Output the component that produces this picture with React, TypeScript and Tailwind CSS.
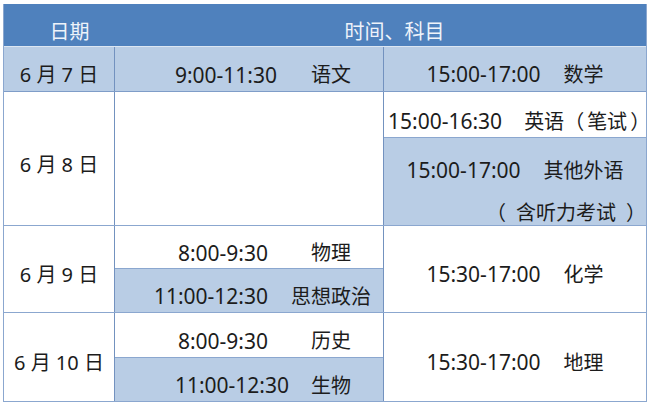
import React from "react";

const FONT = { fontFamily: '"Noto Sans", "Noto Sans CJK SC", sans-serif' };

const MidSlot = ({ time = "", subject = "", pr = "pr-[14px]", bg = "bg-white", h = "h-[45px]", border = true }) => {
  return (
    <div className={`grid grid-cols-[176px_80px] items-center pt-[12px] ${h} ${bg} ${border ? "border-b border-[#8ba7cf]" : ""}`}>
      <span className={`text-right text-[21px] ${pr}`}>{time}</span>
      <span className="text-center">{subject}</span>
    </div>
  );
};

const RightSlot = ({ time = "", subject = "" }) => {
  return (
    <div className="flex items-center justify-center gap-[23px] h-full pt-[11px]">
      <span className="text-[21px]">{time}</span>
      <span>{subject}</span>
    </div>
  );
};

const DateCell = ({ text = "", bg = "bg-white" }) => {
  return (
    <div className={`w-[111px] shrink-0 flex items-center justify-center pt-[12px] border-r border-[#7392bf] ${bg}`}>
      <span className="whitespace-pre">{text}</span>
    </div>
  );
};

// fullwidth brackets, spaced like the original sheet
const Paren = ({ children = "" as React.ReactNode, open = "pr-[3px]", close = "pl-[4px]" }) => {
  return (
    <span className="inline-flex items-center whitespace-nowrap shrink-0">
      <span className={open}>（</span>
      <span>{children}</span>
      <span className={close}>）</span>
    </span>
  );
};

export default function App() {
  return (
    <div className="w-[650px] h-[405px] bg-white pt-[4px] pl-[3px] text-[20px] text-[#1c1c1c] leading-none" style={FONT}>
      <div className="w-[644px] border-l border-r border-b border-[#8ba7cf]">
        {/* header */}
        <div className="flex h-[43px] bg-[#4f81bd] text-[#eef3fa] border-b border-[#dce6f2]">
          <div className="w-[111px] flex items-end justify-center pb-[4px] pl-[20px]">日期</div>
          <div className="flex-1 flex items-end justify-center pb-[4px] pl-[28px]">时间、科目</div>
        </div>

        {/* 6月7日 */}
        <div className="flex h-[45px] bg-[#b9cde5] border-b border-[#7f9dc8]">
          <DateCell text="6 月 7 日" bg="bg-[#b9cde5]" />
          <div className="w-[269px] shrink-0 border-r border-[#7392bf]">
            <MidSlot time="9:00-11:30" subject="语文" pr="pr-[14px]" bg="bg-[#b9cde5]" h="h-full" border={false} />
          </div>
          <div className="flex-1">
            <RightSlot time="15:00-17:00" subject="数学" />
          </div>
        </div>

        {/* 6月8日 */}
        <div className="flex h-[134px] border-b border-[#8ba7cf]">
          <DateCell text="6 月 8 日" />
          <div className="w-[269px] shrink-0 border-r border-[#7392bf] bg-white" />
          <div className="flex-1 flex flex-col min-w-0">
            <div className="h-[46px] flex items-center gap-[22px] border-b border-[#8ba7cf] pl-[4px] pt-[14px] whitespace-nowrap">
              <span className="text-[21px] shrink-0">15:00-16:30</span>
              <span className="inline-flex items-center shrink-0">
                英语<Paren open="pr-[3px]" close="pl-[3px]">笔试</Paren>
              </span>
            </div>
            <div className="flex-1 bg-[#b9cde5] flex flex-col">
              <div className="flex items-center justify-center gap-[23px] pt-[22px]">
                <span className="text-[21px]">15:00-17:00</span>
                <span>其他外语</span>
              </div>
              <div className="flex justify-end pt-[22px]">
                <Paren open="pr-[10px]" close="pl-[10px]">含听力考试</Paren>
              </div>
            </div>
          </div>
        </div>

        {/* 6月9日 */}
        <div className="flex h-[87px] border-b border-[#8ba7cf]">
          <DateCell text="6 月 9 日" />
          <div className="w-[269px] shrink-0 border-r border-[#7392bf] flex flex-col">
            <MidSlot time="8:00-9:30" subject="物理" pr="pr-[23px]" h="h-[43px]" />
            <div className="flex-1">
              <MidSlot time="11:00-12:30" subject="思想政治" pr="pr-[23px]" bg="bg-[#b9cde5]" h="h-full" border={false} />
            </div>
          </div>
          <div className="flex-1">
            <RightSlot time="15:30-17:00" subject="化学" />
          </div>
        </div>

        {/* 6月10日 */}
        <div className="flex h-[88px]">
          <DateCell text="6 月 10 日" />
          <div className="w-[269px] shrink-0 border-r border-[#7392bf] flex flex-col">
            <MidSlot time="8:00-9:30" subject="历史" pr="pr-[23px]" h="h-[45px]" />
            <div className="flex-1">
              <MidSlot time="11:00-12:30" subject="生物" pr="pr-[2px]" bg="bg-[#b9cde5]" h="h-full" border={false} />
            </div>
          </div>
          <div className="flex-1">
            <RightSlot time="15:30-17:00" subject="地理" />
          </div>
        </div>
      </div>
    </div>
  );
}
